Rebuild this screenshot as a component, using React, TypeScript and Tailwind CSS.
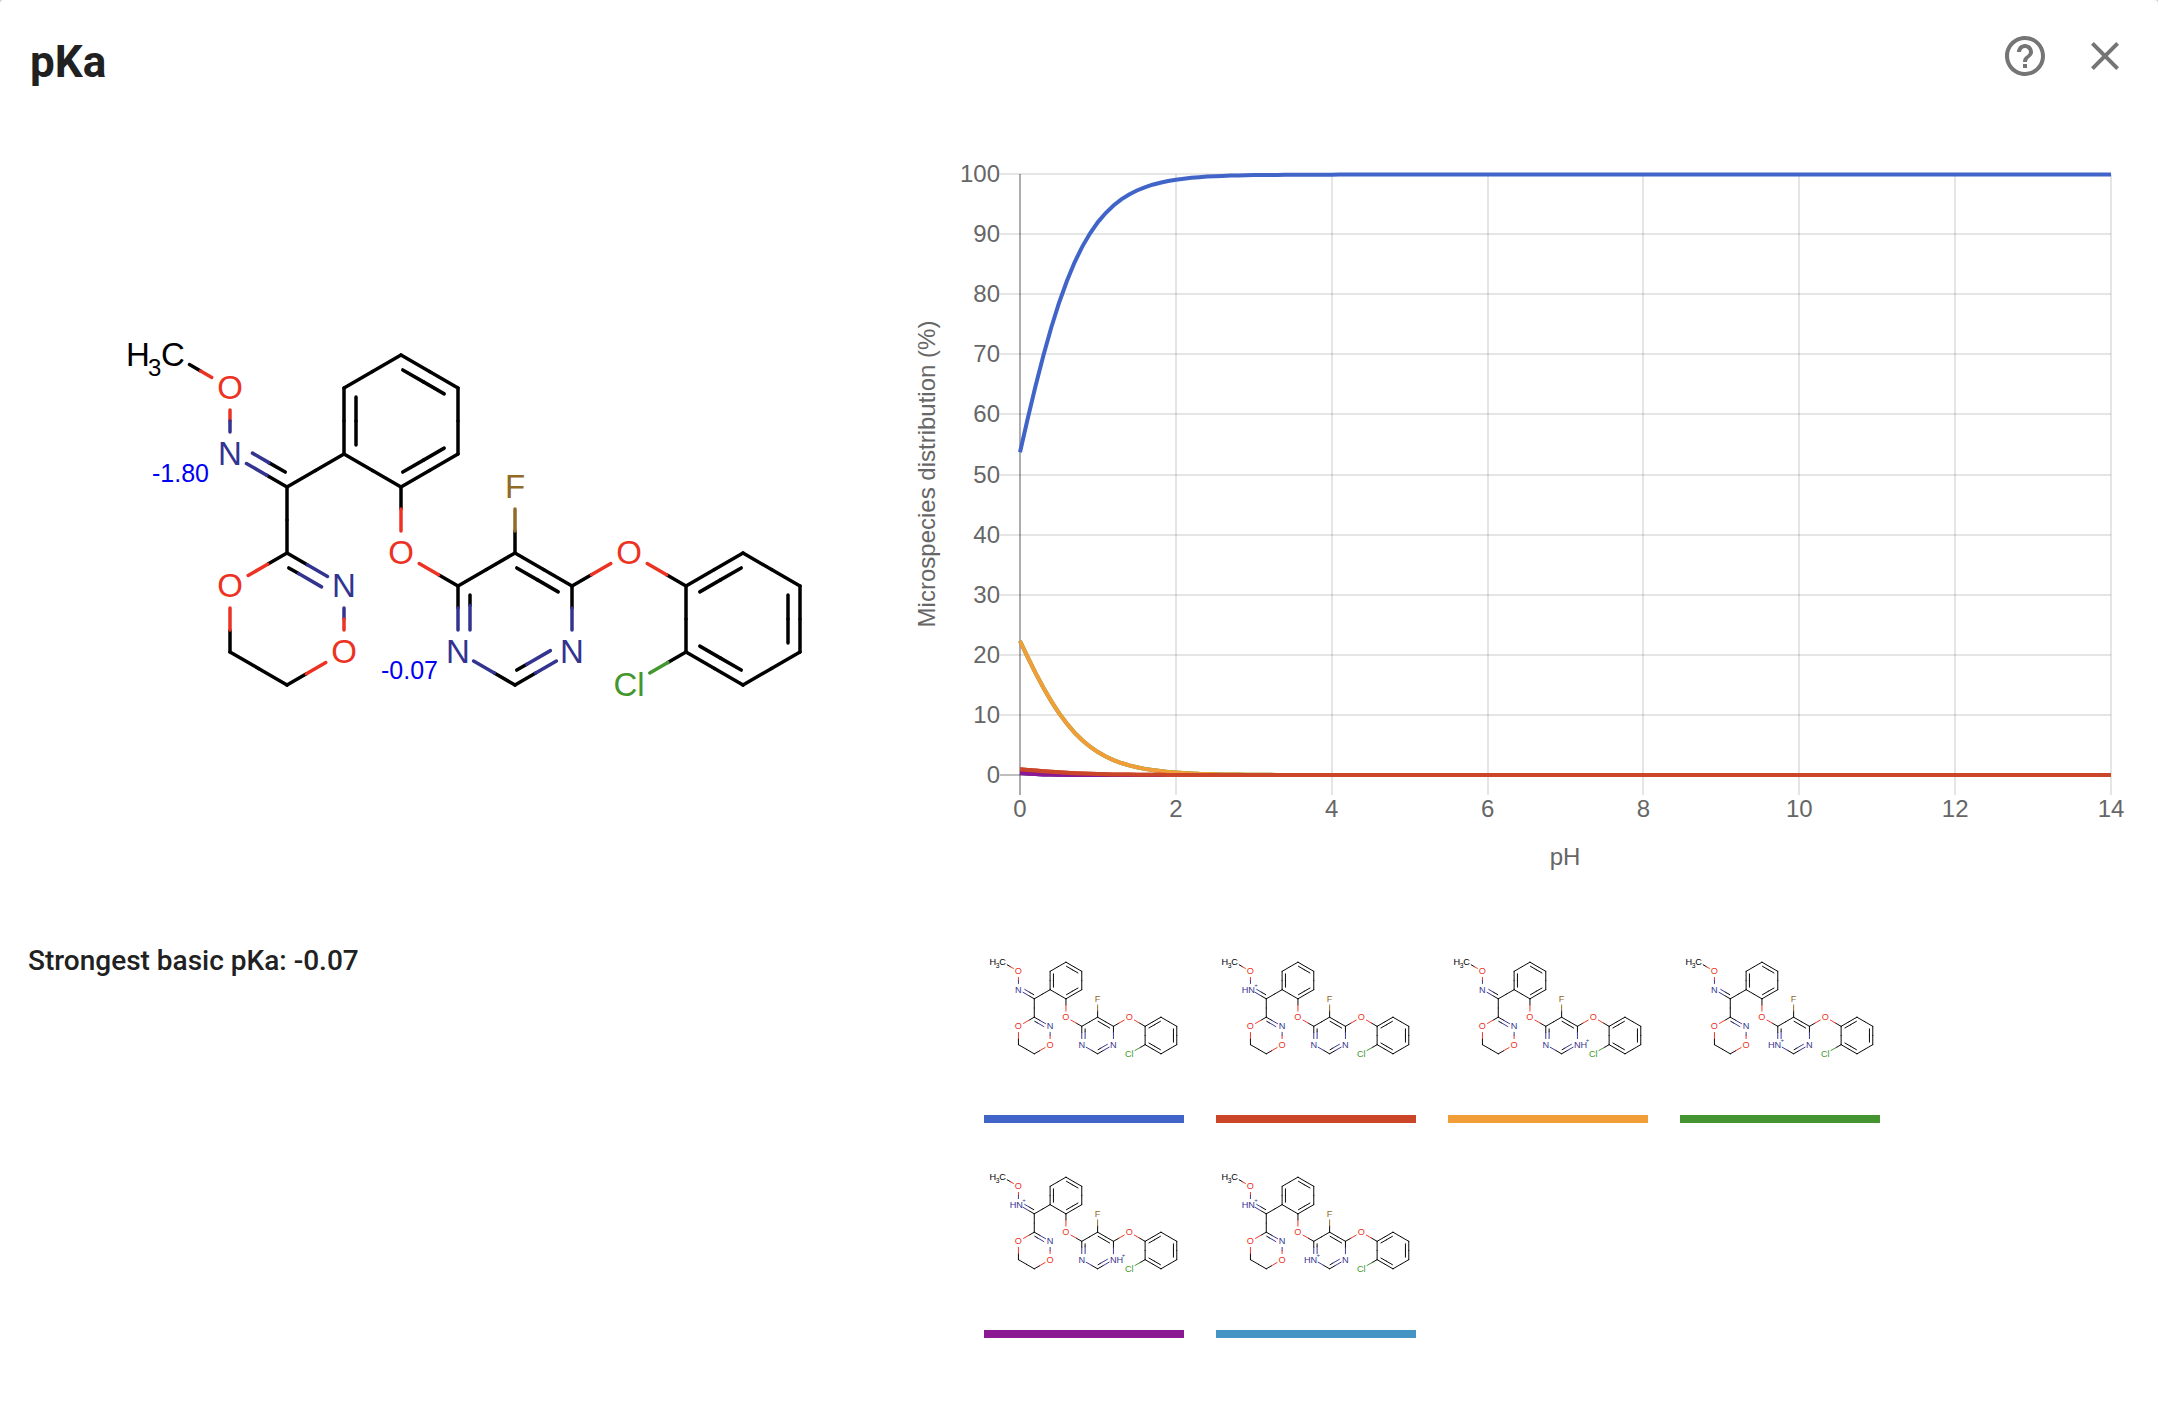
import { MdClose, MdHelpOutline } from "react-icons/md";

type Point = [number, number];
type Site = "oxime" | "leftN" | "rightN";

const BLACK = "#000000";
const RED = "#ec3323";
const NAVY = "#333390";
const BROWN = "#906a26";
const GREEN = "#43972e";

interface Atom {
  at: Point;
  label?: string;
  color?: string;
  /** Space kept free around the label on slanted bonds. */
  clear?: number;
}

const ATOMS: Record<string, Atom> = {
  me: { at: [173, 355], label: "C", clear: 19 },
  o1: { at: [230, 388], label: "O", color: RED, clear: 21 },
  n1: { at: [230, 454], label: "N", color: NAVY, clear: 19 },
  c1: { at: [287, 487] },
  a1: { at: [344, 454] },
  a2: { at: [344, 388] },
  a3: { at: [401, 355] },
  a4: { at: [458, 388] },
  a5: { at: [458, 454] },
  a6: { at: [401, 487] },
  d1: { at: [287, 553] },
  d2: { at: [344, 586], label: "N", color: NAVY, clear: 19 },
  d3: { at: [344, 652], label: "O", color: RED, clear: 21 },
  d4: { at: [287, 685] },
  d5: { at: [230, 652] },
  d6: { at: [230, 586], label: "O", color: RED, clear: 21 },
  o2: { at: [401, 553], label: "O", color: RED, clear: 21 },
  p1: { at: [458, 586] },
  p2: { at: [515, 553] },
  p3: { at: [572, 586] },
  p4: { at: [572, 652], label: "N", color: NAVY, clear: 18 },
  p5: { at: [515, 685] },
  p6: { at: [458, 652], label: "N", color: NAVY, clear: 18 },
  f: { at: [515, 487], label: "F", color: BROWN, clear: 22 },
  o3: { at: [629, 553], label: "O", color: RED, clear: 21 },
  b1: { at: [686, 586] },
  b2: { at: [743, 553] },
  b3: { at: [800, 586] },
  b4: { at: [800, 652] },
  b5: { at: [743, 685] },
  b6: { at: [686, 652] },
  cl: { at: [629, 685], label: "Cl", color: GREEN, clear: 24 },
};

interface Bond {
  from: string;
  to: string;
  /** Side of the second line of a double bond, seen along from -> to. */
  side?: 1 | -1;
  /** Where the colour changes on the second line. */
  split?: number;
}

const BONDS: Bond[] = [
  { from: "me", to: "o1" },
  { from: "o1", to: "n1" },
  { from: "c1", to: "n1", side: 1 },
  { from: "c1", to: "a1" },
  { from: "a1", to: "a2", side: 1 },
  { from: "a2", to: "a3" },
  { from: "a3", to: "a4", side: 1 },
  { from: "a4", to: "a5" },
  { from: "a5", to: "a6", side: 1 },
  { from: "a6", to: "a1" },
  { from: "a6", to: "o2" },
  { from: "c1", to: "d1" },
  { from: "d1", to: "d2", side: 1, split: 0.3 },
  { from: "d2", to: "d3" },
  { from: "d4", to: "d3" },
  { from: "d4", to: "d5" },
  { from: "d5", to: "d6" },
  { from: "d1", to: "d6" },
  { from: "p1", to: "o2" },
  { from: "p1", to: "p2" },
  { from: "p2", to: "p3", side: 1 },
  { from: "p3", to: "p4" },
  { from: "p5", to: "p4", side: -1, split: 0.3 },
  { from: "p5", to: "p6" },
  { from: "p1", to: "p6", side: -1, split: 0.3 },
  { from: "p2", to: "f" },
  { from: "p3", to: "o3" },
  { from: "b1", to: "o3" },
  { from: "b1", to: "b2", side: 1 },
  { from: "b2", to: "b3" },
  { from: "b3", to: "b4", side: 1 },
  { from: "b4", to: "b5" },
  { from: "b5", to: "b6", side: 1 },
  { from: "b6", to: "b1" },
  { from: "b6", to: "cl" },
];

const SITE_ATOM: Record<Site, string> = { oxime: "n1", leftN: "p6", rightN: "p4" };

function BondLines({ from, to, side, split = 0.5 }: Bond) {
  const a = ATOMS[from];
  const b = ATOMS[to];
  const dx = b.at[0] - a.at[0];
  const dy = b.at[1] - a.at[1];
  const length = Math.hypot(dx, dy);
  const ux = dx / length;
  const uy = dy / length;
  const room = (atom: Atom) => (atom.clear ? (dx === 0 ? 22 : atom.clear) : 0);

  const segment = (offset: number, inset: number, at: number, key: string) => {
    const start = Math.max(room(a), inset);
    const end = length - Math.max(room(b), inset);
    const middle = start + (end - start) * at;
    const point = (t: number): Point => [
      a.at[0] + ux * t - uy * offset,
      a.at[1] + uy * t + ux * offset,
    ];
    const [x1, y1] = point(start);
    const [xm, ym] = point(middle);
    const [x2, y2] = point(end);
    return (
      <g key={key}>
        <line x1={x1} y1={y1} x2={xm} y2={ym} stroke={a.color ?? BLACK} />
        <line x1={x2} y1={y2} x2={xm} y2={ym} stroke={b.color ?? BLACK} />
      </g>
    );
  };

  return (
    <>
      {segment(0, 0, 0.5, "main")}
      {side && segment(side * 12, 9, split, "second")}
    </>
  );
}

function Molecule({
  charged = [],
  annotated = false,
}: {
  charged?: Site[];
  annotated?: boolean;
}) {
  const has = (site: Site) => charged.includes(site);
  const shift = (id: string) => (id === "n1" && has("oxime") ? 4 : 0);
  return (
    <g fontFamily="'Liberation Sans', Arial, sans-serif" fontSize="33">
      <g strokeWidth="3.5" strokeLinecap="round">
        {BONDS.map((bond) => (
          <BondLines key={bond.from + bond.to} {...bond} />
        ))}
      </g>
      {Object.entries(ATOMS)
        .filter(([, atom]) => atom.label)
        .map(([id, atom]) => (
          <text
            key={id}
            x={atom.at[0] + shift(id)}
            y={atom.at[1] + 11}
            textAnchor="middle"
            fill={atom.color ?? BLACK}
          >
            {atom.label}
          </text>
        ))}
      <text x="126" y="366">
        H
      </text>
      <text x="148" y="376" fontSize="24">
        3
      </text>
      {(["oxime", "leftN", "rightN"] as Site[]).filter(has).map((site) => {
        const id = SITE_ATOM[site];
        const x = ATOMS[id].at[0] + shift(id);
        const y = ATOMS[id].at[1];
        const right = site === "rightN";
        return (
          <g key={site} fill={NAVY}>
            <text x={right ? x + 11 : x - 35} y={y + 11}>
              H
            </text>
            <text x={right ? x + 30 : x + 10} y={y - 8} fontSize="22">
              +
            </text>
          </g>
        );
      })}
      {annotated && (
        <g fill="#0000f5" fontSize="25">
          <text x="152" y="482">
            -1.80
          </text>
          <text x="381" y="679">
            -0.07
          </text>
        </g>
      )}
    </g>
  );
}

const LEFT = 1020;
const RIGHT = 2111;
const TOP = 174;
const BOTTOM = 775;

const toX = (pH: number) => LEFT + ((RIGHT - LEFT) * pH) / 14;
const toY = (share: number) => BOTTOM - ((BOTTOM - TOP) * share) / 100;

const neutral = (pH: number) => 99.9 / (1 + 0.86 * 10 ** -pH);
const single = (ratio: number) => (pH: number) => ratio * 10 ** -pH * neutral(pH);
const double = (ratio: number) => (pH: number) => ratio * 10 ** (-2 * pH) * neutral(pH);

interface Species {
  name: string;
  color: string;
  bar: string;
  charged: Site[];
  share: (pH: number) => number;
}

const SPECIES: Species[] = [
  { name: "Neutral form", color: "#4064c8", bar: "bg-[#4064c8]", charged: [], share: neutral },
  { name: "Oxime protonated", color: "#cb4528", bar: "bg-[#cb4528]", charged: ["oxime"], share: single(0.018) },
  { name: "Right nitrogen protonated", color: "#f19e38", bar: "bg-[#f19e38]", charged: ["rightN"], share: single(0.415) },
  { name: "Left nitrogen protonated", color: "#449431", bar: "bg-[#449431]", charged: ["leftN"], share: single(0.415) },
  { name: "Oxime and right nitrogen protonated", color: "#8a1993", bar: "bg-[#8a1993]", charged: ["oxime", "rightN"], share: double(0.006) },
  { name: "Oxime and left nitrogen protonated", color: "#4495c3", bar: "bg-[#4495c3]", charged: ["oxime", "leftN"], share: double(0.006) },
];

function curve(share: (pH: number) => number) {
  return Array.from({ length: 141 }, (_, i) => i / 10)
    .map((pH, i) => `${i ? "L" : "M"}${toX(pH).toFixed(1)} ${toY(share(pH)).toFixed(1)}`)
    .join("");
}

const SHARES = [0, 10, 20, 30, 40, 50, 60, 70, 80, 90, 100];
const PHS = [0, 2, 4, 6, 8, 10, 12, 14];

function Chart() {
  return (
    <svg
      viewBox="900 112 1226 796"
      className="block h-auto w-full"
      role="img"
      aria-label="Microspecies distribution by pH"
    >
      <g strokeWidth="2" stroke="#000000" shapeRendering="crispEdges">
        {SHARES.map((s) => (
          <line
            key={s}
            x1={LEFT - 20}
            x2={RIGHT}
            y1={Math.round(toY(s))}
            y2={Math.round(toY(s))}
            strokeOpacity={s ? 0.1 : 0.25}
          />
        ))}
        {PHS.map((p) => (
          <line
            key={p}
            x1={Math.round(toX(p))}
            x2={Math.round(toX(p))}
            y1={TOP}
            y2={BOTTOM + 20}
            strokeOpacity={p ? 0.1 : 0.32}
          />
        ))}
      </g>
      <g fill="none" strokeWidth="4">
        {[...SPECIES].reverse().map((s) => (
          <path key={s.name} d={curve(s.share)} stroke={s.color} />
        ))}
        <path d={curve(SPECIES[4].share)} stroke={SPECIES[4].color} />
        <path d={curve(SPECIES[1].share)} stroke={SPECIES[1].color} />
      </g>
      <g fill="#666666" fontFamily="'Liberation Sans', Arial, sans-serif" fontSize="24">
        {SHARES.map((s) => (
          <text key={s} x={LEFT - 20} y={Math.round(toY(s)) + 8} textAnchor="end">
            {s}
          </text>
        ))}
        {PHS.map((p) => (
          <text key={p} x={toX(p)} y="817" textAnchor="middle">
            {p}
          </text>
        ))}
        <text x="1565" y="865" textAnchor="middle">
          pH
        </text>
        <text transform="translate(935 474) rotate(-90)" textAnchor="middle">
          Microspecies distribution (%)
        </text>
      </g>
    </svg>
  );
}

export default function App() {
  return (
    <div className="min-h-screen bg-neutral-300">
      <div
        role="dialog"
        aria-labelledby="dialog-title"
        className="min-h-screen rounded-t bg-white font-['Roboto',sans-serif] text-[#212121]"
      >
        <header className="flex items-start justify-between pt-8 pr-[29px] pl-[30px]">
          <h1 id="dialog-title" className="text-[44px] leading-[60px] font-bold">
            pKa
          </h1>
          <div className="flex h-20 gap-8 text-[#757575]">
            <button type="button" aria-label="Help" className="size-12">
              <MdHelpOutline className="size-12" />
            </button>
            <button type="button" aria-label="Close" className="size-12">
              <MdClose className="size-12" />
            </button>
          </div>
        </header>

        <main className="grid grid-cols-[868fr_1226fr] px-8">
          <svg
            viewBox="32 112 868 796"
            className="block h-auto w-full"
            role="img"
            aria-label="Structure with pKa values"
          >
            <Molecule annotated />
          </svg>
          <Chart />

          <p className="-ml-1 pt-[33px] text-[28px] leading-10 font-medium">
            Strongest basic pKa: -0.07
          </p>
          <ul className="grid grid-cols-[repeat(4,200px)] gap-x-8 pl-21">
            {SPECIES.map((s) => (
              <li key={s.name}>
                <svg viewBox="106 160 720 720" className="mb-[7px] block size-50" role="img" aria-label={s.name}>
                  <Molecule charged={s.charged} />
                </svg>
                <div className={`h-2 ${s.bar}`} />
              </li>
            ))}
          </ul>
        </main>
      </div>
    </div>
  );
}
